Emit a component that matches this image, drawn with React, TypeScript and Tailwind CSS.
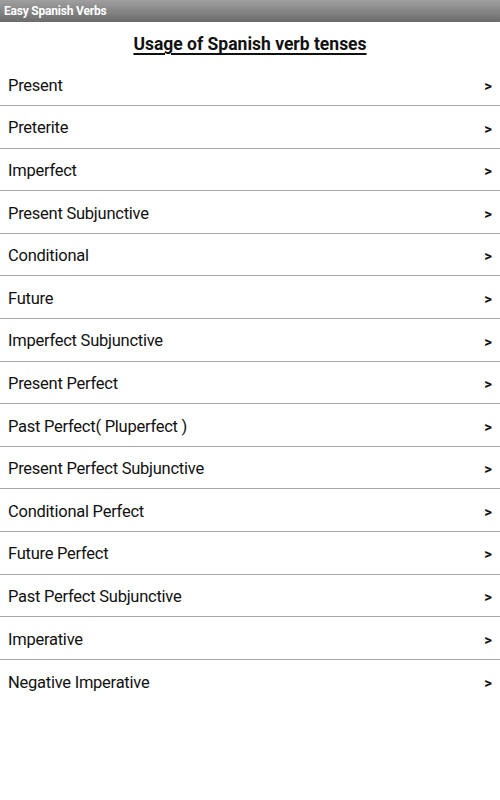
import React from "react";

const items = [
  "Present",
  "Preterite",
  "Imperfect",
  "Present Subjunctive",
  "Conditional",
  "Future",
  "Imperfect Subjunctive",
  "Present Perfect",
  "Past Perfect( Pluperfect )",
  "Present Perfect Subjunctive",
  "Conditional Perfect",
  "Future Perfect",
  "Past Perfect Subjunctive",
  "Imperative",
  "Negative Imperative",
];

export default function App() {
  return (
    <div className="w-[500px] h-[800px] bg-white font-['Roboto',sans-serif] overflow-hidden">
      <div className="h-[22px] bg-gradient-to-b from-[#a0a0a0] to-[#6c6c6c] flex items-center pl-[4px]">
        <span className="text-white text-[12px] font-bold tracking-[-0.2px]">Easy Spanish Verbs</span>
      </div>
      <div className="h-[41.4px] flex items-center justify-center pt-[3px]">
        <span className="text-[17.5px] font-bold text-[#111] underline underline-offset-[3px] decoration-[1.5px]">
          Usage of Spanish verb tenses
        </span>
      </div>
      <div>
        {items.map((t, i) => (
          <div
            key={t}
            className={
              i < items.length - 1
                ? "h-[42.6px] flex items-center justify-between pl-[8px] pr-[8px] pt-[4px] border-b border-[#a8a8a8]"
                : "h-[42.6px] flex items-center justify-between pl-[8px] pr-[8px] pt-[4px]"
            }
          >
            <span className="text-[16.5px] tracking-[-0.25px] text-[#111]">{t}</span>
            <span className="text-[15px] font-bold text-[#111]">&gt;</span>
          </div>
        ))}
      </div>
    </div>
  );
}
